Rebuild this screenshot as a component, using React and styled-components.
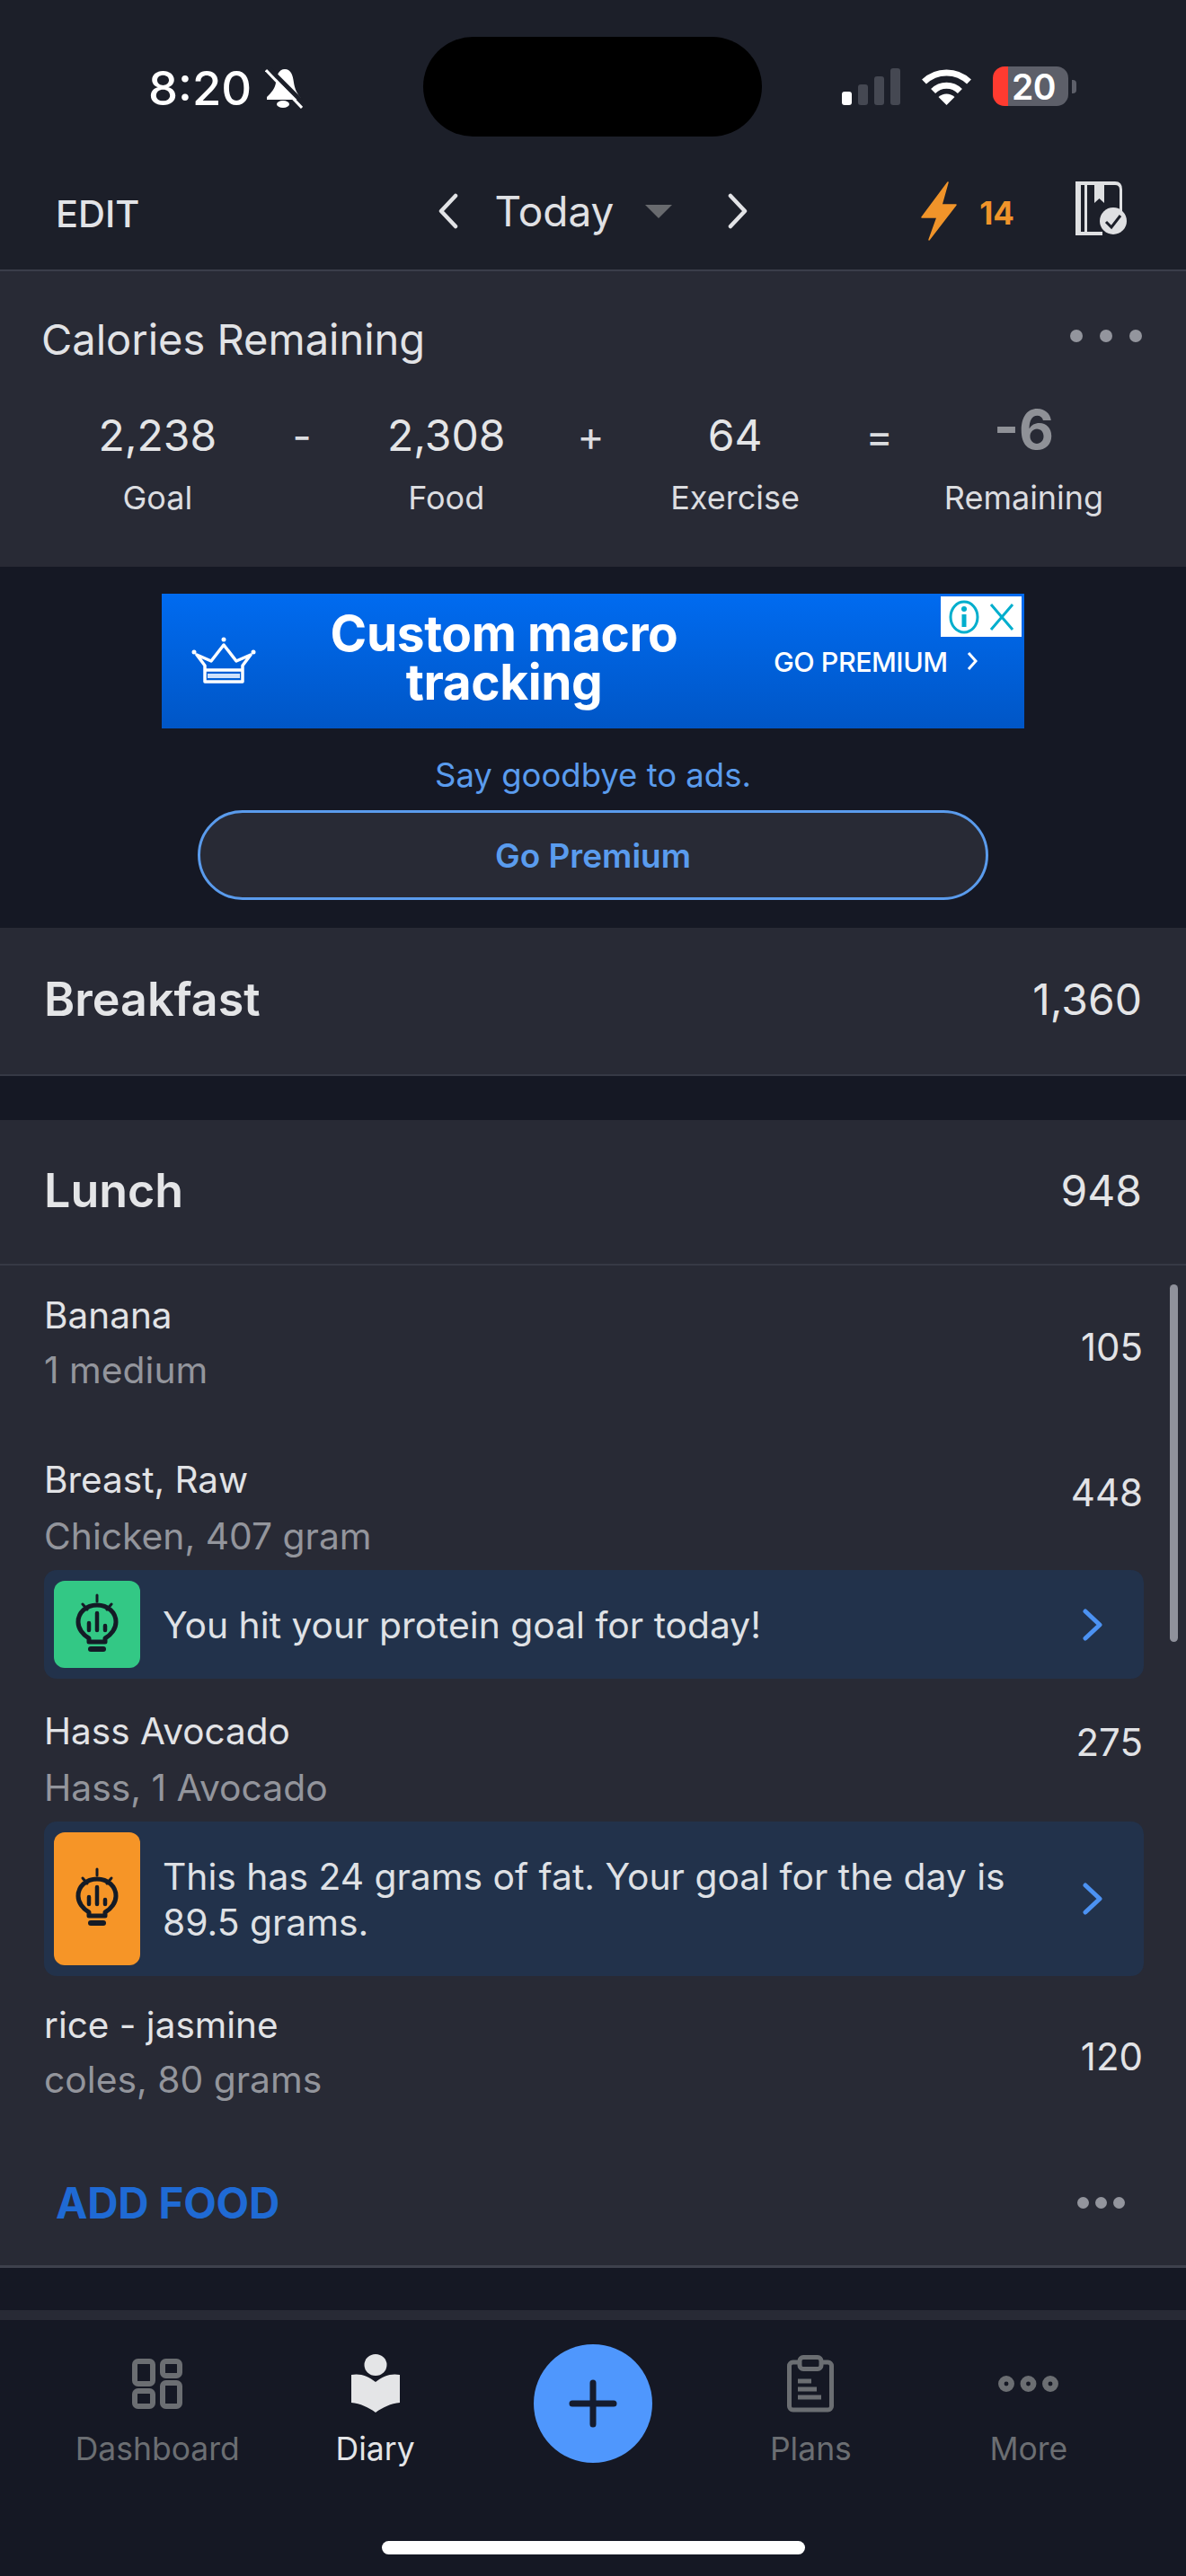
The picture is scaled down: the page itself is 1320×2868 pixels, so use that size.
import React from "react";
import styled, { createGlobalStyle } from "styled-components";

const Global = createGlobalStyle`
  html, body { margin: 0; padding: 0; background: #151824; }
  * { box-sizing: border-box; }
  body { font-family: Inter, "Liberation Sans", sans-serif; -webkit-font-smoothing: antialiased; }
`;

const Page = styled.div`
  width: 1320px; height: 2868px; overflow: hidden; position: relative;
  display: flex; flex-direction: column; background: #151824; color: #e4e5e7;
`;
const Header = styled.header`
  height: 302px; background: #1c1f29; border-bottom: 2px solid #3a3d4a;
  display: flex; flex-direction: column;
`;
const StatusBar = styled.div`
  height: 175px; padding-top: 41px; display: grid; grid-template-columns: 471px 377px 1fr;
  color: #fff;
`;
const TimeGroup = styled.div`
  display: flex; align-items: flex-start; padding: 28px 0 0 165px; gap: 15px;
`;
const Time = styled.span`
  font-size: 52.5px; font-weight: 500; line-height: 58px;
`;
const Island = styled.div`
  height: 111px; background: #000; border-radius: 56px;
`;
const StatusRight = styled.div`
  display: flex; align-items: flex-start; padding: 33px 0 0 89px;
`;
const Signal = styled.div`
  display: flex; align-items: flex-end; gap: 7px; height: 41px; margin-top: 2px;
`;
const SignalBar = styled.i`
  display: block; width: 11px; height: ${p => p.$h}px; border-radius: 3px;
  background: ${p => (p.$on ? "#fff" : "#454852")};
`;
const Wifi = styled.svg`
  width: 57px; height: 43px; margin-left: 23px; margin-top: 1px;
`;
const Battery = styled.div`
  position: relative; width: 84px; height: 44px; margin-left: 23px; border-radius: 13px;
  background: linear-gradient(90deg, #ff3b30 0 17px, #5d5f69 17px);
  display: flex; align-items: center; justify-content: center;
  font-size: 39px; font-weight: 600; color: #fff; padding-left: 7px; letter-spacing: -0.5px;
  &::after {
    content: ""; position: absolute; left: 88px; top: 15px; width: 5px; height: 15px;
    border-radius: 0 4px 4px 0; background: #5d5f69;
  }
`;
const NavBar = styled.div`
  flex: 1; display: grid; grid-template-columns: 1fr auto 1fr; align-items: start; padding: 0 66px 0 62px;
`;
const EditBtn = styled.span`
  font-size: 41.5px; font-weight: 500; line-height: 50px; margin-top: 38px; color: #e2e3e6;
`;
const DateNav = styled.div`
  display: flex; align-items: center; height: 40px; margin-top: 40px; margin-left: 4px;
`;
const Chevron = styled.svg`
  width: 23px; height: 40px; flex: none;
`;
const Today = styled.span`
  font-size: 46px; font-weight: 400; line-height: 50px; margin: 0 35px 0 41px; color: #e0e1e4;
`;
const Caret = styled.i`
  display: block; width: 0; height: 0; margin-right: 62px;
  border-left: 15px solid transparent; border-right: 15px solid transparent; border-top: 15px solid #686a6e;
`;
const NavRight = styled.div`
  display: flex; justify-content: flex-end; align-items: flex-start; padding-top: 27px;
`;
const Streak = styled.span`
  font-size: 35px; font-weight: 700; color: #f0942a; line-height: 40px; margin: 15px 68px 0 25px;
`;
const Card = styled.section`
  background: #282a35;
`;
const CaloriesCard = styled(Card)`
  height: 329px; padding: 0 46px;
`;
const CardTop = styled.div`
  display: flex; justify-content: space-between; align-items: center; height: 60px; margin-top: 46px;
`;
const CardTitle = styled.h2`
  margin: 0; font-size: 47px; font-weight: 400; color: #e2e3e6; line-height: 60px;
`;
const Dots = styled.div`
  display: flex; gap: ${p => p.$gap}px; margin: ${p => p.$m};
  & > i { display: block; width: ${p => p.$size}px; height: ${p => p.$size}px; border-radius: 50%; background: #93959d; }
`;
const Equation = styled.div`
  display: grid; grid-template-columns: repeat(7, 160.7px); margin: 47px 0 0 49px;
`;
const Stat = styled.div`
  display: flex; flex-direction: column; align-items: center;
`;
const StatValue = styled.span`
  height: 60px; line-height: 60px; font-size: 48px; font-weight: ${p => (p.$big ? 700 : 400)};
  color: ${p => (p.$big ? "#8f9197" : "#e4e5e7")};
  ${p => p.$big && "font-size: 60px; margin-top: -7px; height: 67px;"}
`;
const StatLabel = styled.span`
  margin-top: 16px; line-height: 46px; font-size: 36px; color: #dcdde0;
`;
const Op = styled.span`
  text-align: center; height: 60px; line-height: 60px; font-size: 46px; color: #dcdde0;
`;
const Promo = styled.section`
  height: 402px; padding-top: 30px; display: flex; flex-direction: column; align-items: center;
`;
const AdBanner = styled.div`
  position: relative; width: 960px; height: 150px; flex: none;
  background: linear-gradient(180deg, #006bf0, #0056c6);
  display: flex; align-items: center; color: #fff; padding-left: 33px;
`;
const Headline = styled.div`
  width: 460px; margin: 0 0 8px 46px; text-align: center; font-size: 55px; font-weight: 700; line-height: 54px;
  letter-spacing: -0.4px;
`;
const AdCta = styled.div`
  margin-left: 70px; display: flex; align-items: center; gap: 20px; font-size: 30.5px; font-weight: 500; letter-spacing: -0.5px;
`;
const AdChoice = styled.div`
  position: absolute; top: 3px; right: 3px; width: 90px; height: 45px; background: #fff;
  display: flex; align-items: center; justify-content: space-around; padding: 0 3px;
`;
const PromoNote = styled.p`
  margin: 30px 0 0; font-size: 36.5px; line-height: 44px; color: #5a9cee; font-weight: 400;
`;
const PremiumBtn = styled.div`
  margin-top: 17px; width: 880px; height: 100px; border-radius: 50px; border: 3px solid #5a9bec;
  background: #282a35; display: flex; align-items: center; justify-content: center;
  font-size: 37px; font-weight: 600; color: #5a9cee;
`;
const MealHeader = styled.div`
  height: ${p => p.$h}px; padding: 0 49px; padding-bottom: 4px; display: flex; align-items: center; justify-content: space-between;
  border-bottom: 2px solid #363945;
`;
const MealTitle = styled.h3`
  margin: 0; font-size: 52px; font-weight: 600; color: #e4e5e7;
`;
const MealCal = styled.span`
  font-size: 48px; font-weight: 400; color: #e4e5e7;
`;
const Lunch = styled(Card)`
  position: relative; margin-top: 49px; height: 1278px; border-bottom: 3px solid #3e414d;
`;
const FoodList = styled.div`
  padding: 26px 48px 0 49px;
`;
const FoodRow = styled.div`
  display: flex; justify-content: space-between; align-items: flex-start; margin-top: ${p => p.$mt || 0}px;
`;
const FoodName = styled.div`
  font-size: 40.5px; line-height: 60px; color: #e2e3e6;
`;
const FoodSub = styled.div`
  font-size: 40.8px; line-height: ${p => p.$lh}px; color: #93959c;
`;
const FoodCal = styled.span`
  font-size: 42px; line-height: 50px; color: #e2e3e6; margin-top: ${p => p.$mt}px;
`;
const Tip = styled.div`
  height: ${p => p.$h}px; margin: ${p => p.$mt}px -1px 0 0; padding: 12px 45px 12px 11px; border-radius: 14px; background: #22324b;
  display: flex; align-items: stretch;
`;
const TipIcon = styled.div`
  width: 96px; flex: none; border-radius: 12px; background: ${p => p.$color};
  display: flex; align-items: center; justify-content: center;
`;
const TipText = styled.div`
  flex: 1; align-self: center; margin-left: 25px; padding: 2px 20px 0 0; font-size: 40.8px; line-height: 51px; color: #dfe1e5;
`;
const TipArrow = styled.svg`
  width: 23px; height: 36px; align-self: center; flex: none;
`;
const FoodFooter = styled.div`
  display: flex; justify-content: space-between; align-items: center; height: 80px; margin-top: 67px; padding: 0 20px 0 13px;
`;
const AddFood = styled.span`
  font-size: 47.5px; font-weight: 700; color: #1f6ad4; letter-spacing: -0.2px;
`;
const Scrollbar = styled.div`
  position: absolute; left: 1302px; top: 183px; width: 9px; height: 398px; border-radius: 5px; background: #8f919b;
`;
const BottomNav = styled.nav`
  margin-top: 47px; flex: 1; border-top: 11px solid #282a35; background: #151824; padding-top: 27px;
`;
const Tabs = styled.div`
  display: grid; grid-template-columns: repeat(5, 1fr); padding: 0 54px; height: 138px; justify-items: center;
`;
const Tab = styled.div`
  display: flex; flex-direction: column; align-items: center; padding-top: 9px;
  color: ${p => (p.$active ? "#e4e5e7" : "#6b6e72")};
`;
const TabIcon = styled.div`
  height: 70px; display: flex; align-items: center; justify-content: center;
`;
const TabLabel = styled.span`
  margin-top: 17px; font-size: 35.5px; line-height: 42px;
`;
const Fab = styled.div`
  width: 132px; height: 132px; border-radius: 50%; background: #4f97fd;
  display: flex; align-items: center; justify-content: center;
`;
const HomeBar = styled.div`
  width: 471px; height: 15px; margin: 81px auto 0; border-radius: 8px; background: #fff;
`;

const Back = ({ color = "#e2e3e6" }) => (
  <Chevron viewBox="0 0 23 40"><path d="M20 3 L4 20 L20 37" fill="none" stroke={color} strokeWidth="4.5" strokeLinecap="round" strokeLinejoin="round" /></Chevron>
);
const Forward = ({ color = "#e2e3e6" }) => (
  <Chevron viewBox="0 0 23 40"><path d="M3 3 L19 20 L3 37" fill="none" stroke={color} strokeWidth="4.5" strokeLinecap="round" strokeLinejoin="round" /></Chevron>
);
const Bell = () => (
  <svg width="42" height="46" viewBox="0 0 42 46" style={{ marginTop: 6 }}>
    <path d="M22 2 C15 2 13 9 12 17 C11 24 7 28 2 33 L2 36 H40 L40 34 C36 30 33 24 32 17 C31 9 29 2 22 2 Z" fill="#fff" />
    <ellipse cx="20" cy="41" rx="7" ry="4" fill="#fff" />
    <path d="M3 0 L44 41" stroke="#1c1f29" strokeWidth="5" />
    <path d="M1 3 L41 45" stroke="#fff" strokeWidth="3" />
  </svg>
);
const Bolt = () => (
  <svg width="40" height="66" viewBox="0 0 40 66" style={{ flex: "none" }}>
    <path d="M30 1 L1 40 H18 L9 65 L39 26 H23 Z" fill="#f0942a" stroke="#f0942a" strokeWidth="1.5" strokeLinejoin="round" />
  </svg>
);
const JournalCheck = () => (
  <svg width="57" height="60" viewBox="0 0 57 60" style={{ flex: "none" }}>
    <path d="M0 0 H6 V60 H0 Z M10 0 H13 V56 H10 Z M6 0 H44 Q52 0 52 9 V34 H49 V9 Q49 4 44 4 H6 Z M6 56 H30 V60 H6 Z" fill="#dfe0e2" />
    <path d="M21 2 H32 V24 L26.5 19 L21 24 Z" fill="#dfe0e2" />
    <circle cx="42" cy="44" r="15" fill="#dfe0e2" />
    <path d="M34 45 L40 51 L50 38" fill="none" stroke="#1c1f29" strokeWidth="3" />
  </svg>
);
const Bulb = () => (
  <svg width="60" height="70" viewBox="0 0 60 70" fill="none" stroke="#141b26" strokeLinecap="round">
    <path d="M30 2 V9 M14 12 L19 18 M46 12 L41 18" strokeWidth="3" />
    <path d="M21 54 V50 C14 46 9 39 9 32 C9 21 18 13 30 13 C42 13 51 21 51 32 C51 39 46 46 39 50 V54 Z" strokeWidth="5" strokeLinejoin="round" />
    <path d="M21 41 V33 M30 41 V22 M39 41 V36" strokeWidth="4.5" />
    <path d="M23 62 H37" strokeWidth="6" />
  </svg>
);
const Crown = () => (
  <svg width="72" height="54" viewBox="0 0 72 54" fill="none" stroke="#fff" style={{ flex: "none" }}>
    <path d="M15 32 L6 20 L22 27 L36 9 L50 27 L66 20 L57 32 V50 H15 Z" strokeWidth="3.5" strokeLinejoin="round" />
    <path d="M15 37 H57" strokeWidth="3.5" />
    <path d="M18 43.5 H54" strokeWidth="5" stroke="#cfe1fb" />
    <circle cx="36" cy="3" r="2.5" fill="#fff" stroke="none" />
    <circle cx="3" cy="17" r="2.5" fill="#fff" stroke="none" />
    <circle cx="69" cy="17" r="2.5" fill="#fff" stroke="none" />
  </svg>
);
const DashboardIcon = () => (
  <svg width="56" height="56" viewBox="0 0 56 56" fill="none" stroke="currentColor" strokeWidth="6">
    <rect x="3" y="3" width="20" height="25" rx="3.5" />
    <rect x="34" y="3" width="19" height="16" rx="3.5" />
    <rect x="3" y="36" width="20" height="17" rx="3.5" />
    <rect x="34" y="27" width="19" height="26" rx="3.5" />
  </svg>
);
const DiaryIcon = () => (
  <svg width="56" height="66" viewBox="0 0 56 66" fill="currentColor">
    <ellipse cx="28" cy="12" rx="12.5" ry="12" />
    <path d="M1 23 C10 21 20 24 28 31 C36 24 46 21 55 23 V54 C45 55 36 59 28 65 C20 59 11 55 1 54 Z" />
  </svg>
);
const PlansIcon = () => (
  <svg width="52" height="64" viewBox="0 0 52 64" fill="none" stroke="currentColor">
    <rect x="2.5" y="8" width="47" height="53" rx="4" strokeWidth="5" />
    <rect x="14" y="2.5" width="24" height="13" rx="4" strokeWidth="5" fill="#151824" />
    <path d="M12 29 H27 M12 38 H33 M12 47 H38" strokeWidth="5" />
  </svg>
);
const MoreIcon = () => (
  <svg width="67" height="18" viewBox="0 0 67 18" fill="none" stroke="currentColor" strokeWidth="6.5">
    <circle cx="9" cy="9" r="5.7" /><circle cx="33.5" cy="9" r="5.7" /><circle cx="58" cy="9" r="5.7" />
  </svg>
);

const ThreeDots = (props) => <Dots {...props}><i /><i /><i /></Dots>;

const stats = [
  ["2,238", "Goal"], "-", ["2,308", "Food"], "+", ["64", "Exercise"], "=", ["-6", "Remaining", true],
];

export default function App() {
  return (
    <Page>
      <Global />
      <Header>
        <StatusBar>
          <TimeGroup><Time>8:20</Time><Bell /></TimeGroup>
          <Island />
          <StatusRight>
            <Signal>
              <SignalBar $on $h={15} /><SignalBar $h={23} /><SignalBar $h={32} /><SignalBar $h={41} />
            </Signal>
            <Wifi viewBox="0 0 57 43" fill="none" stroke="#fff">
              <path d="M3.5 16 A36 36 0 0 1 53.5 16" strokeWidth="7" />
              <path d="M13.6 26.5 A21 21 0 0 1 43.4 26.5" strokeWidth="7" />
              <path d="M28.5 42 L19.5 33 A13 13 0 0 1 37.5 33 Z" fill="#fff" stroke="none" />
            </Wifi>
            <Battery>20</Battery>
          </StatusRight>
        </StatusBar>
        <NavBar>
          <EditBtn>EDIT</EditBtn>
          <DateNav>
            <Back />
            <Today>Today</Today>
            <Caret />
            <Forward />
          </DateNav>
          <NavRight>
            <Bolt />
            <Streak>14</Streak>
            <JournalCheck />
          </NavRight>
        </NavBar>
      </Header>

      <CaloriesCard>
        <CardTop>
          <CardTitle>Calories Remaining</CardTitle>
          <ThreeDots $gap={19} $size={14} $m="-8px 3px 0 0" />
        </CardTop>
        <Equation>
          {stats.map((s, i) =>
            typeof s === "string" ? (
              <Op key={i}>{s}</Op>
            ) : (
              <Stat key={i}>
                <StatValue $big={s[2]}>{s[0]}</StatValue>
                <StatLabel>{s[1]}</StatLabel>
              </Stat>
            )
          )}
        </Equation>
      </CaloriesCard>

      <Promo>
        <AdBanner>
          <Crown />
          <Headline>Custom macro tracking</Headline>
          <AdCta>
            GO PREMIUM
            <svg width="14" height="24" viewBox="0 0 14 24"><path d="M3 3 L11 12 L3 21" fill="none" stroke="#fff" strokeWidth="3" /></svg>
          </AdCta>
          <AdChoice>
            <svg width="36" height="40" viewBox="0 0 36 40" fill="none" stroke="#00aecd">
              <ellipse cx="18" cy="20" rx="15" ry="17" strokeWidth="3" />
              <path d="M18 17 V31" strokeWidth="5" />
              <circle cx="18" cy="11" r="3" fill="#00aecd" stroke="none" />
            </svg>
            <svg width="30" height="32" viewBox="0 0 30 32" fill="none" stroke="#00aecd" strokeWidth="3">
              <path d="M3 2 L27 30 M27 2 L3 30" />
            </svg>
          </AdChoice>
        </AdBanner>
        <PromoNote>Say goodbye to ads.</PromoNote>
        <PremiumBtn>Go Premium</PremiumBtn>
      </Promo>

      <Card>
        <MealHeader $h={165}>
          <MealTitle>Breakfast</MealTitle>
          <MealCal>1,360</MealCal>
        </MealHeader>
      </Card>

      <Lunch>
        <MealHeader $h={162}>
          <MealTitle>Lunch</MealTitle>
          <MealCal>948</MealCal>
        </MealHeader>
        <FoodList>
          <FoodRow>
            <div><FoodName>Banana</FoodName><FoodSub $lh={60}>1 medium</FoodSub></div>
            <FoodCal $mt={40}>105</FoodCal>
          </FoodRow>
          <FoodRow $mt={63}>
            <div><FoodName>Breast, Raw</FoodName><FoodSub $lh={64}>Chicken, 407 gram</FoodSub></div>
            <FoodCal $mt={19}>448</FoodCal>
          </FoodRow>
          <Tip $mt={6} $h={121}>
            <TipIcon $color="#33c885"><Bulb /></TipIcon>
            <TipText>You hit your protein goal for today!</TipText>
            <TipArrow viewBox="0 0 23 36"><path d="M3 3 L19 18 L3 33" fill="none" stroke="#4c92f2" strokeWidth="5" strokeLinecap="round" strokeLinejoin="round" /></TipArrow>
          </Tip>
          <FoodRow $mt={29}>
            <div><FoodName>Hass Avocado</FoodName><FoodSub $lh={64}>Hass, 1 Avocado</FoodSub></div>
            <FoodCal $mt={17}>275</FoodCal>
          </FoodRow>
          <Tip $mt={6} $h={172}>
            <TipIcon $color="#f69527"><Bulb /></TipIcon>
            <TipText>This has 24 grams of fat. Your goal for the day is 89.5 grams.</TipText>
            <TipArrow viewBox="0 0 23 36"><path d="M3 3 L19 18 L3 33" fill="none" stroke="#4c92f2" strokeWidth="5" strokeLinecap="round" strokeLinejoin="round" /></TipArrow>
          </Tip>
          <FoodRow $mt={25}>
            <div><FoodName>rice - jasmine</FoodName><FoodSub $lh={60}>coles, 80 grams</FoodSub></div>
            <FoodCal $mt={40}>120</FoodCal>
          </FoodRow>
          <FoodFooter>
            <AddFood>ADD FOOD</AddFood>
            <ThreeDots $gap={7} $size={13} />
          </FoodFooter>
        </FoodList>
        <Scrollbar />
      </Lunch>

      <BottomNav>
        <Tabs>
          <Tab><TabIcon><DashboardIcon /></TabIcon><TabLabel>Dashboard</TabLabel></Tab>
          <Tab $active><TabIcon><DiaryIcon /></TabIcon><TabLabel>Diary</TabLabel></Tab>
          <Fab>
            <svg width="54" height="54" viewBox="0 0 54 54"><path d="M4 27 H50 M27 4 V50" stroke="#151c2e" strokeWidth="7" strokeLinecap="round" /></svg>
          </Fab>
          <Tab><TabIcon><PlansIcon /></TabIcon><TabLabel>Plans</TabLabel></Tab>
          <Tab><TabIcon><MoreIcon /></TabIcon><TabLabel>More</TabLabel></Tab>
        </Tabs>
        <HomeBar />
      </BottomNav>
    </Page>
  );
}
